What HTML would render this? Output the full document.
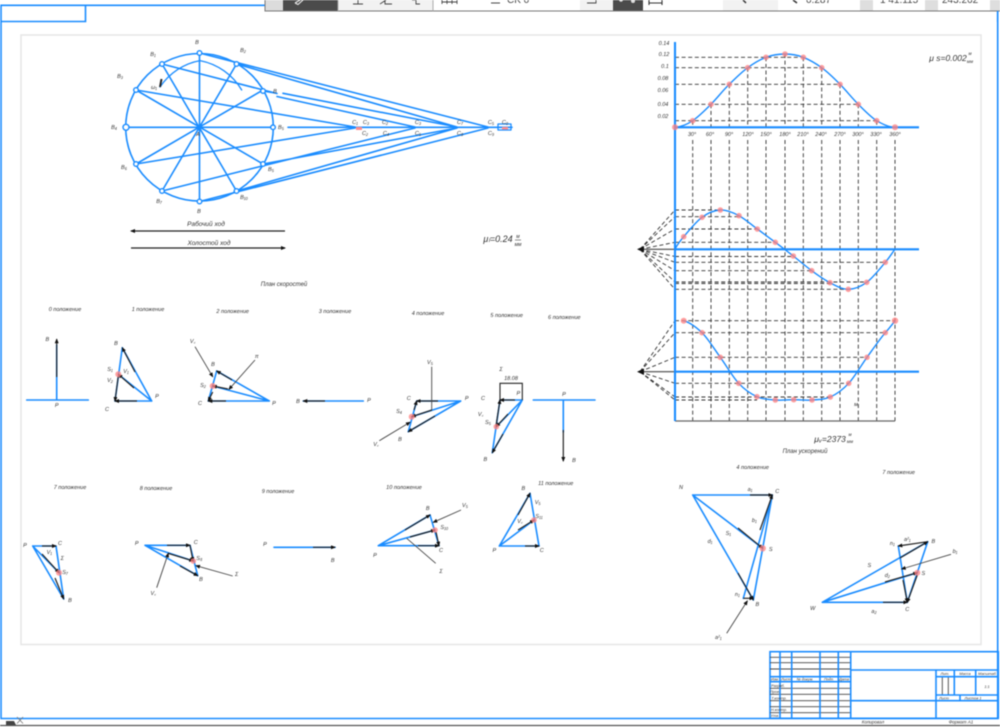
<!DOCTYPE html>
<html><head><meta charset="utf-8"><title>Чертёж</title>
<style>
html,body{margin:0;padding:0;background:#fff;width:1000px;height:727px;overflow:hidden}
svg{display:block;filter:blur(.5px)}
text{font-family:"Liberation Sans",sans-serif;font-style:italic;font-size:5.5px;fill:#333;text-anchor:middle}
.b{stroke:#1a8cff;stroke-width:1.6;fill:none;stroke-linejoin:round;stroke-linecap:round}
.x{stroke:#1a8cff;stroke-width:2.1;fill:none}
.k{stroke:#222;stroke-width:1.2;fill:none;marker-end:url(#a)}
.g{stroke:#444;stroke-width:.9;fill:none;marker-end:url(#a)}
.d{stroke:#333;stroke-width:.9;stroke-dasharray:4 2.6;fill:none}
.t{stroke:#1a8cff;stroke-width:1.6;fill:none}
.n{stroke:#444;stroke-width:.9;fill:none}
.p{fill:#ff8080;opacity:.75}
.tb text{font-style:normal;font-size:10px;text-anchor:start;fill:#444}
</style></head><body>
<svg width="1000" height="727" viewBox="0 0 1000 727" xmlns="http://www.w3.org/2000/svg">
<defs><marker id="a" markerUnits="userSpaceOnUse" markerWidth="5" markerHeight="4" refX="4" refY="2" orient="auto"><path d="M0 0L5 2L0 4z" fill="#111"/></marker></defs>
<rect width="1000" height="727" fill="#fff"/>

<!-- sheet and frame -->
<rect x="21" y="35" width="960" height="609.5" fill="#fff" stroke="#e6e6e6" stroke-width="1.5"/>
<path class="t" d="M1 5.3H997.7V718.500H1zM1 21.5H85.5V5.3"/>

<!-- mechanism -->
<g class="b">
<circle cx="199.5" cy="127.3" r="73.8"/>
<path d="M160 87A62 66 0 0 1 200 60.6A62 62 0 0 1 241.7 90" stroke-width="1.300"/>
<path d="M199.5 53V201.5M126 127.3H273M162 64L236.5 191M236.5 64L162 191M136 90L263 164M263 90L136 164"/>
<path d="M288 127.3H512"/>
<path d="M199.5 53L488 127M236.5 64L457 127M162 64L277 93.5M277 96.500L415 127M136 90L355 127M263 91L275 93M283 93.300L457 127"/>
<path d="M199.5 201.5L488 128M236.5 191L457 128M162 191L415 128M136 164L355 128M263 164L457 128"/>
<rect x="498" y="124" width="13" height="6" stroke-width="1.3"/>
</g>
<g fill="#fff" stroke="#1a8cff" stroke-width="1.4">
<circle cx="199.5" cy="53" r="2.3"/><circle cx="236.5" cy="64" r="2.3"/><circle cx="263" cy="91" r="2.3"/><circle cx="273" cy="127.3" r="2.3"/><circle cx="263" cy="164" r="2.3"/><circle cx="236.5" cy="191" r="2.3"/><circle cx="199.5" cy="201.5" r="2.3"/><circle cx="162" cy="191" r="2.3"/><circle cx="136" cy="164" r="2.3"/><circle cx="126" cy="127.3" r="3"/><circle cx="136" cy="90" r="2.3"/><circle cx="162" cy="64" r="2.3"/>
</g>
<circle cx="199.5" cy="127.3" r="2.3" fill="#1a8cff"/>
<rect x="356" y="127" width="6" height="3" fill="#ff8c8c"/><rect x="502" y="127" width="6" height="2.5" fill="#ff8c8c"/>
<path d="M160 87L161.500 79" stroke="#222" stroke-width="2"/>
<g>
<text x="197" y="44">B</text><text x="153" y="56">B₁</text><text x="243" y="52">B₂</text><text x="120" y="78">B₃</text><text x="114" y="129">B₄</text><text x="281" y="129">B₅</text><text x="124" y="169">B₆</text><text x="159" y="203">B₇</text><text x="199" y="213">B</text><text x="244" y="199">B₁₀</text><text x="271" y="171">B₅</text><text x="154" y="89">ω₁</text><text x="198" y="136">A</text><text x="275" y="93">B</text>
<text x="355" y="124">C₁</text><text x="366" y="124">C₃</text><text x="365" y="135">C₂</text><text x="385" y="124">C₂</text><text x="386" y="135">C₄</text><text x="418" y="124">C₃</text><text x="418" y="135">C₅</text><text x="460" y="124">C₇</text><text x="460" y="135">C₈</text><text x="491" y="124">C₅</text><text x="491" y="135">C₉</text><text x="505" y="124">C₀</text>
</g>
<path class="k" d="M285 231H131"/><path class="k" d="M131 248H285"/>
<text x="206" y="226" style="font-size:6.500px">Рабочий ход</text>
<text x="209" y="245" style="font-size:6.500px">Холостой ход</text>
<text x="498" y="242" style="font-size:9px">μₗ=0.24</text><text x="518" y="238" style="font-size:5px">м</text><line x1="515" y1="240" x2="521" y2="240" stroke="#444" stroke-width=".6"/><text x="518" y="246" style="font-size:5px">мм</text>

<!-- chart dashed lines -->
<g class="d">
<path d="M692.700 120.700V127M711 104.300V127M729.300 84.300V127M747.700 67.700V127M766 57.300V127M785 54V127M803.300 57.300V127M821.700 67.700V127M840 84.300V127M858.300 104.300V127M876.700 120.700V127"/>
<path d="M692.700 140V421M711 140V421M729.300 140V421M747.700 140V421M766 140V421M785 140V421M803.300 140V421M821.700 140V421M840 140V421M858.300 140V421M876.700 140V421M895 140V421"/>
<path d="M675 120.700H876.700M675 104.300H858.300M675 84.300H840M675 67.700H821.700M675 57.300H803.300"/>
<path d="M675 210H720M675 216.700H739M675 229H757M675 242.300H775M675 256.500H793M675 262.300H885M675 270.700H811.700M675 282H866.700M675 283.500H830M675 289.300H848"/>
<path d="M675 320.700H895M675 332.700H885M675 357.300H867M675 383.300H848.700M675 397H830M675 400H757"/>
<path d="M640 249.300L675 210M640 249.300L675 216.700M640 249.300L675 229M640 249.300L675 242.300M640 249.300L675 256.500M640 249.300L675 262.300M640 249.300L675 270.700M640 249.300L675 282M640 249.300L675 289.300"/>
<path d="M640 371.700L675 320.700M640 371.700L675 332.700M640 371.700L675 357.300M640 371.700L675 383.300M640 371.700L675 397M640 371.700L675 400"/>
</g>
<path d="M675 421H895M640 249.300H675M640 371.700H675" stroke="#666" stroke-width="1.300" fill="none"/>
<path d="M637 249.300L644 246V252.500zM637 371.700L644 368.500V375z" fill="#111"/>
<path class="x" d="M675 42V421M675 127.300H919M675 249.300H919M675 371.700H919"/>
<g stroke="#1a8cff" stroke-width="1.400" fill="none">
<path d="M675 127.300C680 127 687 124.500 692.700 120.700S705 110.400 711 104.300S723 90.400 729.300 84.300S741.500 72.200 747.700 67.700S760 59.600 766 57.300S778.500 54 785 54S797.500 55 803.300 57.300S815.500 63.200 821.700 67.700S834 78.200 840 84.300S852.200 98.200 858.300 104.300S870.500 116.900 876.700 120.700S889 127.300 895 127.300"/>
<path d="M675 249.300C677 245 679.200 242 683.700 236.700S695.900 221.800 702 217.300S714.200 210.300 720.300 210S732.900 212.500 739 215.700S751.200 224.600 757.300 229S769.300 237.800 775.300 242.300S787.300 251.300 793.300 256S805.600 266.200 811.700 270.700S823.900 279.600 830 282.700S842.200 289.400 848.300 289.300S860.500 286.800 866.700 282.300S880.600 267.800 885.300 262.300S892 253 895 249.300"/>
<path d="M683.700 320.700C690 322.500 696 327 702 332.700S714.200 348.900 720.300 357.300S732.600 376.700 738.700 383.300S750.900 393.900 757 396.700S769.200 399.500 775.300 400S787.600 399.700 793.700 399.700S805.900 400.500 812 400S824.200 399.800 830.300 397S842.600 389.900 848.700 383.300S860.900 365.700 867 357.300S880 338.800 885.300 332.700S892 325 895 320.700"/>
</g>
<g class="p">
<circle cx="675" cy="127.300" r="3"/><circle cx="692.700" cy="120.700" r="2.800"/><circle cx="711" cy="104.300" r="2.800"/><circle cx="729.300" cy="84.300" r="2.800"/><circle cx="747.700" cy="67.700" r="2.800"/><circle cx="766" cy="57.300" r="2.800"/><circle cx="785" cy="54" r="2.800"/><circle cx="803.300" cy="57.300" r="2.800"/><circle cx="821.700" cy="67.700" r="2.800"/><circle cx="840" cy="84.300" r="2.800"/><circle cx="858.300" cy="104.300" r="2.800"/><circle cx="876.700" cy="120.700" r="2.800"/><circle cx="895" cy="127.300" r="3"/>
<circle cx="683.700" cy="236.700" r="2.800"/><circle cx="702" cy="217.300" r="2.800"/><circle cx="720.300" cy="210" r="2.800"/><circle cx="739" cy="215.700" r="2.800"/><circle cx="757.300" cy="229" r="2.800"/><circle cx="775.300" cy="242.300" r="2.800"/><circle cx="793.300" cy="256" r="2.800"/><circle cx="811.700" cy="270.700" r="2.800"/><circle cx="830" cy="282.700" r="2.800"/><circle cx="848.300" cy="289.300" r="2.800"/><circle cx="866.700" cy="282.300" r="2.800"/><circle cx="885.300" cy="262.300" r="2.800"/>
<circle cx="683.700" cy="320.700" r="3"/><circle cx="702" cy="332.700" r="2.800"/><circle cx="720.300" cy="357.300" r="2.800"/><circle cx="738.700" cy="383.300" r="2.800"/><circle cx="757" cy="396.700" r="2.800"/><circle cx="775.300" cy="400" r="2.800"/><circle cx="793.700" cy="399.700" r="2.800"/><circle cx="812" cy="400" r="2.800"/><circle cx="830.300" cy="397" r="2.800"/><circle cx="848.700" cy="383.300" r="2.800"/><circle cx="867" cy="357.300" r="2.800"/><circle cx="885.300" cy="332.700" r="2.800"/><circle cx="895" cy="320.700" r="3.200"/>
</g>
<g>
<text x="664" y="45">0.14</text><text x="664" y="56">0.12</text><text x="665" y="68">0.1</text><text x="663" y="80">0.08</text><text x="663" y="92">0.06</text><text x="663" y="106">0.04</text><text x="663" y="118">0.02</text>
<text x="692" y="136">30°</text><text x="710" y="136">60°</text><text x="729" y="136">90°</text><text x="748" y="136">120°</text><text x="766" y="136">150°</text><text x="785" y="136">180°</text><text x="803" y="136">210°</text><text x="821" y="136">240°</text><text x="840" y="136">270°</text><text x="858" y="136">300°</text><text x="876" y="136">330°</text><text x="895" y="136">360°</text>
<text x="856" y="406">м</text>
<text x="948" y="61" style="font-size:8.500px">μ s=0.002</text><text x="970" y="55" style="font-size:4.500px">м</text><text x="970" y="63" style="font-size:4.500px">мм</text>
<text x="830" y="442" style="font-size:8.500px">μᵥ=2373</text><text x="850" y="436" style="font-size:4.500px">м</text><text x="850" y="443" style="font-size:4.500px">мм</text>
<text x="805" y="453" style="font-size:6px">План ускорений</text>
<text x="284" y="286" style="font-size:6px">План скоростей</text>
</g>

<!-- position titles -->
<g>
<text x="65" y="311">0 положение</text><text x="148" y="311">1 положение</text><text x="232.700" y="313">2 положение</text><text x="335" y="313">3 положение</text><text x="428" y="315">4 положение</text><text x="506.700" y="317">5 положение</text><text x="564.300" y="319">6 положение</text>
<text x="70" y="489">7 положение</text><text x="156" y="490">8 положение</text><text x="278" y="493">9 положение</text><text x="404" y="489">10 положение</text><text x="555.700" y="485">11 положение</text><text x="752.700" y="469">4 положение</text><text x="898.700" y="474">7 положение</text>
</g>

<!-- pos 0 -->
<path class="b" d="M26.700 400H88.300M56.700 400V345"/><path class="k" d="M56.700 377V339.300"/>
<text x="47.300" y="341">B</text><text x="56.700" y="407">P</text>
<!-- pos 1 -->
<path class="b" d="M151.700 401H115L122.300 347.700L151.700 401L118.300 374.300"/>
<path class="k" d="M137 401H115"/><path class="k" d="M118.300 376L115 401"/><path class="k" d="M134 388L118.300 374.300"/><path class="k" d="M135 372L122.300 347.700"/>
<circle class="p" cx="118.300" cy="374.300" r="3"/>
<text x="110" y="371">S₁</text><text x="126" y="373">V₁</text><text x="110" y="382">V₂</text><text x="116" y="345">B</text><text x="157" y="398">P</text><text x="107" y="411">C</text>
<!-- pos 2 -->
<path class="b" d="M269.300 401H208.300L216.700 371L269.300 401L212.700 386"/>
<path class="k" d="M226 401H208.300"/><path class="k" d="M212.700 392L208.300 401"/><path class="k" d="M228 389L212.700 386"/><path class="k" d="M232 380L216.700 371"/>
<path class="g" d="M195 346.700L212.700 376.700"/><path class="g" d="M255 360L229 389.300"/>
<circle class="p" cx="212.700" cy="386" r="3"/>
<text x="192.700" y="343">V꜀</text><text x="256.700" y="358">π</text><text x="213" y="366">B</text><text x="203" y="387">S₂</text><text x="200" y="405">C</text><text x="274" y="405">P</text>
<!-- pos 3 -->
<path class="b" d="M303.300 401H363.300"/><path class="k" d="M325 401H303.300"/>
<text x="298" y="403">B</text><text x="369" y="402">P</text>
<!-- pos 4 -->
<path class="b" d="M460.700 401H416.700L408.300 431.700L460.700 401L411.700 416.700"/>
<path class="k" d="M438 401H416.700"/><path class="k" d="M414 410L416.700 401"/><path class="k" d="M432 410L411.700 416.700"/><path class="k" d="M435 416L408.300 431.700"/>
<path class="n" d="M431.700 366.700V410"/><path class="g" d="M379.300 440.700L410 422.300"/>
<circle class="p" cx="411.700" cy="416.700" r="3"/>
<text x="408.700" y="400">C</text><text x="399" y="413">S₄</text><text x="400" y="441">B</text><text x="466.700" y="400">P</text><text x="430" y="364">V₅</text><text x="376" y="446">V꜀</text>
<!-- pos 5 -->
<path class="b" d="M522.300 400H500L492.300 452.700L522.300 400L496.300 426.700"/>
<path class="k" d="M515 400H500"/><path class="k" d="M496 426L500 400"/><path class="k" d="M508 414L496.300 426.700"/><path class="k" d="M503 434L492.300 452.700"/>
<path d="M500 400V383.300H522.300V400" stroke="#222" stroke-width="1.100" fill="none"/>
<circle class="p" cx="496.300" cy="426.700" r="2.800"/>
<text x="511" y="380">18.08</text><text x="501" y="371">Σ</text><text x="518.300" y="395">P</text><text x="483" y="400">C</text><text x="480.700" y="416">V꜀</text><text x="488" y="424">S₅</text><text x="485.300" y="461">B</text>
<!-- pos 6 -->
<path class="b" d="M533.300 400H595M563.300 400V432"/><path class="k" d="M563.300 430V461"/>
<text x="574" y="462">B</text><text x="564" y="396">P</text>
<!-- pos 7 -->
<path class="b" d="M32.700 546H56L63.700 599L32.700 546L59 572.700"/>
<path class="k" d="M42 546H56"/><path class="k" d="M42 554L59 572.700"/><path class="k" d="M55 578L63.700 599"/>
<circle class="p" cx="59" cy="572.700" r="3"/>
<text x="25" y="547">P</text><text x="60" y="545">C</text><text x="65" y="574">S₇</text><text x="49.300" y="554">V₁</text><text x="62.300" y="560">Σ</text><text x="70" y="602">B</text>
<!-- pos 8 -->
<path class="b" d="M145 545.300H190L197.700 575.700L145 545.300L193.300 561"/>
<path class="k" d="M167 545.300H190"/><path class="k" d="M190 545.300L193 561"/><path class="k" d="M168 553.300L193.300 561"/><path class="k" d="M180 566L197.700 575.700"/>
<path class="g" d="M156.700 587.700L168.300 553.300"/><path class="g" d="M232.700 576L196 565.700"/>
<circle class="p" cx="193.300" cy="561" r="2.800"/>
<text x="136.700" y="545">P</text><text x="195.700" y="544">C</text><text x="199.300" y="560">S₈</text><text x="201" y="581">B</text><text x="236.700" y="576">Σ</text><text x="153.300" y="595">V꜀</text>
<!-- pos 9 -->
<path class="b" d="M274 547.300H335"/><path class="k" d="M313 547.300H335"/>
<text x="265" y="546">P</text><text x="332.700" y="562">B</text>
<!-- pos 10 -->
<path class="b" d="M378.300 545.700H439L430 515L378.300 545.700L435 530"/>
<path class="k" d="M418 545.700H439"/><path class="k" d="M436 532L439 545.700"/><path class="k" d="M410 537L435 530"/><path class="k" d="M405 530L430 515"/>
<path class="g" d="M461 510L433.300 522.300"/><path class="n" d="M435.700 563.300L406.700 538.300"/>
<circle class="p" cx="435" cy="530" r="2.800"/>
<text x="375" y="557">P</text><text x="441" y="552">C</text><text x="444.300" y="529">S₁₀</text><text x="427.700" y="510">B</text><text x="465" y="507">V₅</text><text x="441" y="573">Σ</text>
<!-- pos 11 -->
<path class="b" d="M499.300 546H539L530 493.300L499.300 546L534 520"/>
<path class="k" d="M525 546H539"/><path class="k" d="M518 530L534 520"/><path class="k" d="M518 515L530 493.300"/>
<circle class="p" cx="534" cy="520" r="2.800"/>
<text x="523.300" y="490">B</text><text x="537.700" y="504">V₅</text><text x="539" y="518">S₁₁</text><text x="520" y="523">V꜀</text><text x="494.300" y="552">P</text><text x="541.700" y="552">C</text>
<!-- big 4 -->
<path class="b" d="M692.700 495H772.300L753.300 600L692.700 495L762.700 548.300M772.300 495L743.300 598.300"/>
<path class="k" d="M750 495H772.300"/><path class="k" d="M760 530L772.300 495" stroke-width="1"/><path class="k" d="M738 528L762.700 548.300"/><path class="k" d="M738 573L753.300 600"/>
<path class="k" d="M743.300 598.300H753.300"/><path class="g" d="M726.700 633.300L747.300 601"/>
<circle class="p" cx="762.700" cy="548.300" r="3.200"/>
<text x="681" y="489">N</text><text x="750" y="491">a₁</text><text x="777.300" y="493">C</text><text x="754.300" y="522">b₁</text><text x="728.300" y="535">S₁</text><text x="710" y="543">d₁</text><text x="770.700" y="551">S</text><text x="737.300" y="596">n₁</text><text x="757.300" y="606">B</text><text x="718.300" y="639">a²₁</text>
<!-- big 7 -->
<path class="b" d="M822.300 602.300H907.300L927.700 541.700L822.300 602.300L917.300 572.700M907.300 602.300L898.300 546"/>
<path class="k" d="M883 602.300H907.300"/><path class="k" d="M927.700 541.700L898.300 546"/><path class="k" d="M885 582L917.300 572.700"/><path class="k" d="M900 558L927.700 541.700" stroke-width="1"/><path class="k" d="M903 580L907.300 602.300"/><path class="k" d="M917.300 575L907.300 602.300" stroke-width="1"/>
<path class="g" d="M951 554.300L901.700 569"/>
<circle class="p" cx="917.300" cy="572.700" r="3"/>
<text x="812.700" y="610">W</text><text x="874" y="613">a₂</text><text x="869.300" y="567">S</text><text x="887.300" y="577">d₂</text><text x="907.300" y="611">C</text><text x="892.300" y="545">n₁</text><text x="907.300" y="541">a²₁</text><text x="933.300" y="543">B</text><text x="955" y="553">b₁</text><text x="923.300" y="575">S</text>

<!-- title block -->
<rect x="770" y="651.700" width="228.300" height="66.600" fill="#fff" class="t" stroke-width="1.800"/>
<path class="n" d="M770 657.300H850.700M770 662.700H850.700M770 669H850.700M770 688.300H850.700M770 694.300H850.700M770 700.700H850.700M770 706.700H850.700M770 712.700H850.700M942.300 676.700V695M948.300 676.700V695"/>
<path class="t" d="M780 651.700V718.300M791.700 651.700V718.300M820 651.700V718.300M838.300 651.700V718.300M850.700 651.700V718.300M770 676.700H850.700M770 681.700H850.700M850.700 670H998.300M850.700 700.700H998.300M936 670V718.300M936 676.700H998.300M936 695H998.300M954.300 670V695M975.700 670V695M960 695V700.700"/>
<g>
<text x="775" y="680.500" style="font-size:3.800px">Изм.</text><text x="786" y="680.500" style="font-size:3.800px">Лист</text><text x="805" y="680.500" style="font-size:3.800px">№ докум.</text><text x="829" y="680.500" style="font-size:3.800px">Подп.</text><text x="844" y="680.500" style="font-size:3.800px">Дата</text>
<text x="778" y="687" style="font-size:3.800px">Разраб.</text><text x="775" y="693" style="font-size:3.800px">Пров.</text><text x="779" y="699.500" style="font-size:3.800px">Т.контр.</text><text x="779" y="711" style="font-size:3.800px">Н.контр.</text><text x="775" y="717" style="font-size:3.800px">Утв.</text>
<text x="945" y="675" style="font-size:3.800px">Лит.</text><text x="965" y="675" style="font-size:3.800px">Масса</text><text x="987" y="675" style="font-size:3.800px">Масштаб</text><text x="987" y="688" style="font-size:3.800px">1:1</text><text x="944" y="699.500" style="font-size:3.800px">Лист</text><text x="973" y="699.500" style="font-size:3.800px">Листов 1</text>
<text x="873" y="723.500" style="font-size:4.500px">Копировал</text><text x="961" y="723.500" style="font-size:4.500px">Формат А1</text>
</g>

<!-- status -->
<path d="M0 725.500H1000" stroke="#555" stroke-width="1.300"/>
<path d="M17 717L23 723.500M23 717L17 723.500" stroke="#777" stroke-width=".8"/>
<path d="M6 721H14L16 725H6z" fill="#444"/>

<!-- toolbar -->
<g class="tb">
<rect x="265" y="0" width="735" height="11" fill="#fff"/>
<rect x="265" y="0" width="18" height="11" fill="#dcdcdc"/>
<rect x="283" y="0" width="55" height="11" fill="#4b4b4b"/>
<rect x="338" y="0" width="95" height="11" fill="#f2f2f2"/>
<rect x="580" y="0" width="33" height="11" fill="#f2f2f2"/>
<rect x="613" y="0" width="30" height="11" fill="#4b4b4b"/>
<rect x="723" y="0" width="55" height="11" fill="#f2f2f2"/>
<rect x="860" y="0" width="13" height="11" fill="#dedede"/>
<rect x="925" y="0" width="13" height="11" fill="#dedede"/>
<rect x="990" y="0" width="10" height="11" fill="#dedede"/>
<path d="M265 0V11H1000" stroke="#777" stroke-width="1" fill="none"/>
<path d="M338 0V11M433 0V11" stroke="#aaa" stroke-width="1" fill="none"/>
<path d="M295 3L300 0M295 3L298 4.500L303 0" stroke="#eee" stroke-width="1.100" fill="none"/>
<path d="M358 0V4M353 4H363M380 4L386 0M385 0V4H392M412 0H416V4H420M442 0V4M447 0V4M452 0V4M457 0V4M442 2H457" stroke="#444" stroke-width=".9" fill="none"/>
<path d="M491 3H500M587 3H596V0" stroke="#444" stroke-width=".9" fill="none"/>
<circle cx="621" cy="0" r="1.800" fill="#ddd"/><circle cx="633" cy="1" r="2" fill="#ddd"/>
<path d="M649 0V5M662 0V5M649 3H662" stroke="#333" stroke-width="1.100" fill="none"/>
<path d="M743 0L746 3" stroke="#333" stroke-width="1.500"/><path d="M793 0L797 3" stroke="#333" stroke-width="1.500"/>
<text x="507" y="2.800">CK 0</text><text x="806" y="2.800">0.287</text><text x="880" y="2.800">1 41.115</text><text x="942" y="2.800">243.262</text>
</g>
<path d="M997.700 11V22" stroke="#1a8cff" stroke-width="1.600"/>
</svg>
</body></html>
